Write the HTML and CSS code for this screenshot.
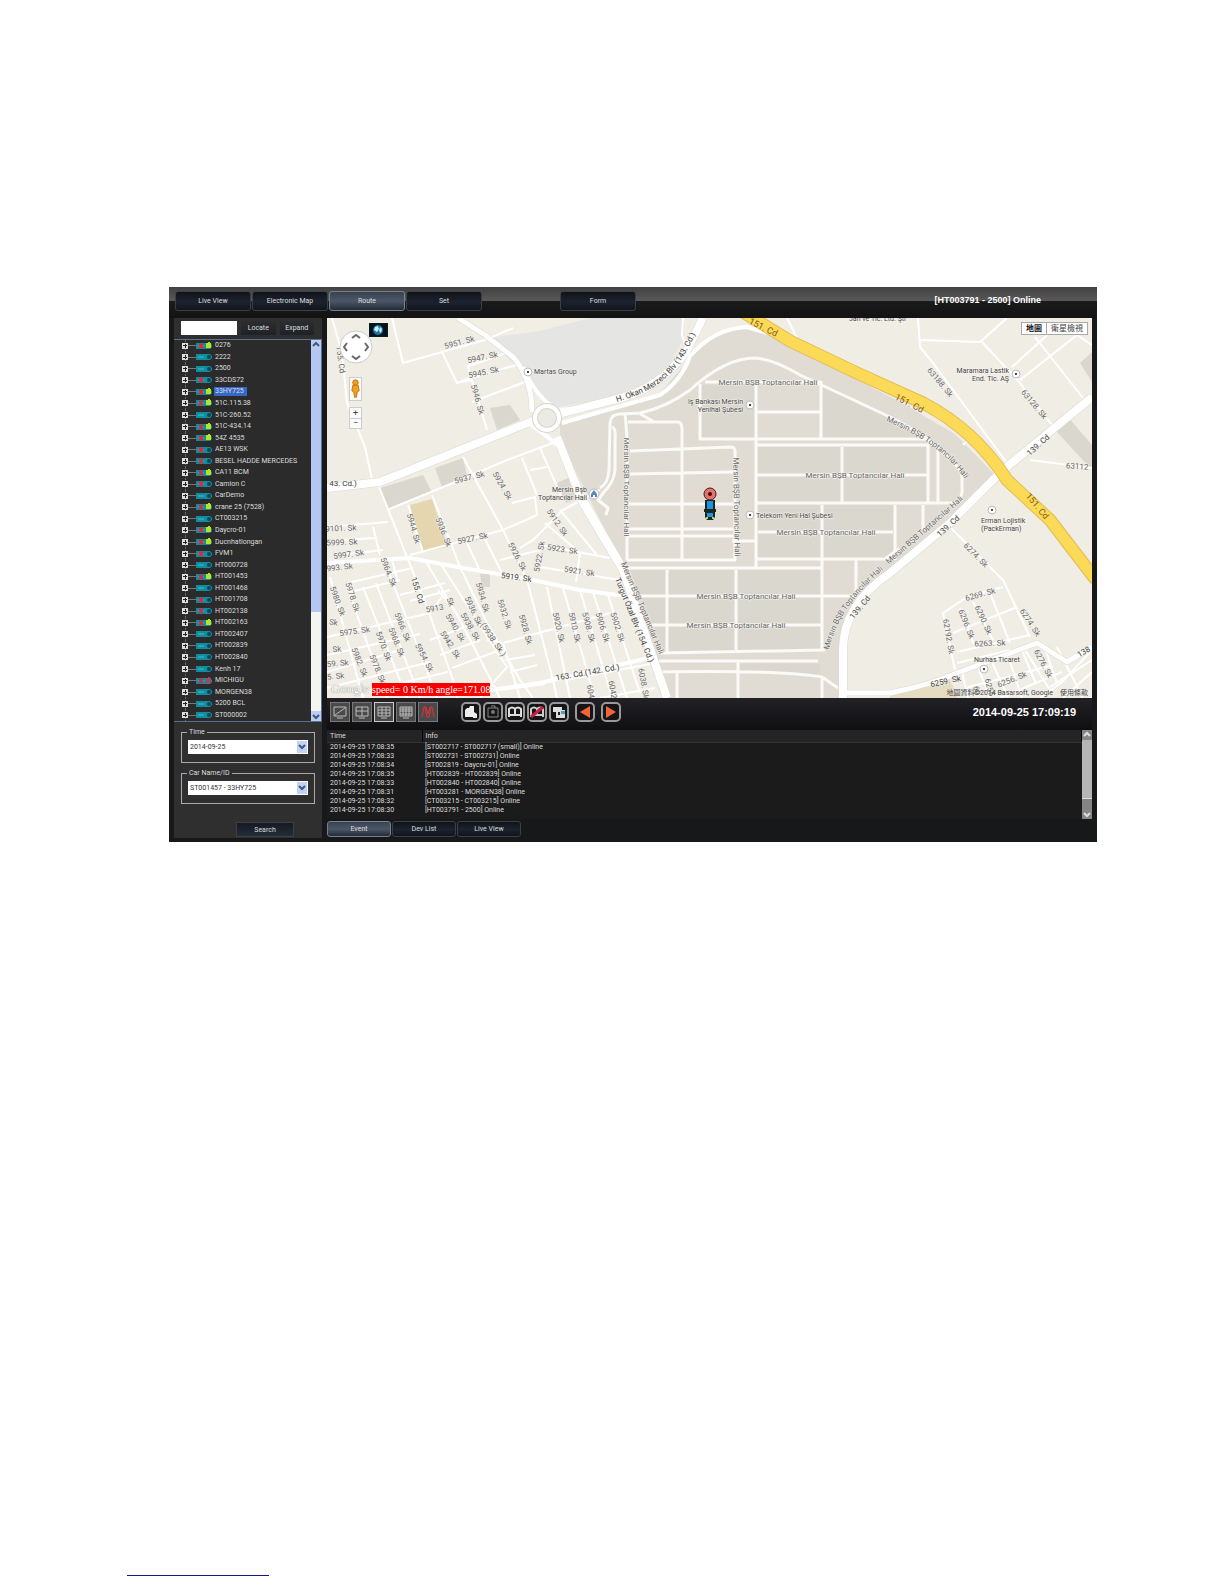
FILE: index.html
```html
<!DOCTYPE html>
<html lang="en">
  <head>
    <meta charset="UTF-8" />
    <meta name="viewport" content="width=device-width, initial-scale=1.0" />
    <title>Route</title>
    <link rel="stylesheet" href="styles.css">
  </head>
  <body>
    <main class="screen">
      <header class="top">
        <nav class="tabs">
          <button>Live View</button>
          <button>Electronic Map</button>
          <button class="current">Route</button>
          <button>Set</button>
          <button class="form-tab">Form</button>
        </nav>
        <strong class="status">[HT003791 - 2500] Online</strong>
      </header>

      <div class="columns">
        <aside class="side">
          <div class="finder">
            <input type="text" aria-label="Car name">
            <button>Locate</button>
            <button>Expand</button>
          </div>
          <div class="tree-box">
            <ul class="tree"></ul>
            <div class="scroll blue">
              <button aria-label="Up"><svg viewBox="0 0 10 10"><path d="M2 6l3-3 3 3" /></svg></button>
              <span class="thumb"></span>
              <button aria-label="Down"><svg viewBox="0 0 10 10"><path d="M2 4l3 3 3-3" /></svg></button>
            </div>
          </div>
          <form class="query">
            <fieldset>
              <legend><label for="time">Time</label></legend>
              <div class="select">
                <select id="time"><option>2014-09-25</option></select>
                <svg viewBox="0 0 10 12"><path d="M2 4l3 3 3-3" /></svg>
              </div>
            </fieldset>
            <fieldset>
              <legend><label for="car">Car Name/ID</label></legend>
              <div class="select">
                <select id="car"><option>ST001457 - 33HY725</option></select>
                <svg viewBox="0 0 10 12"><path d="M2 4l3 3 3-3" /></svg>
              </div>
            </fieldset>
            <button type="button" class="search">Search</button>
          </form>
        </aside>

        <section class="content">
          <div class="map">
            <svg class="map-canvas" viewBox="327 318 765 380" preserveAspectRatio="xMidYMid slice">
              <!-- areas -->
              <path class="gray" d="M486 338L590 318H683L684 338 668 368 650 384 600 400 552 408 530 380 500 350z" />
              <path fill="#f1eee3" d="M480 318H590L540 331 486 338 470 325z" />
              <path class="zone" d="M560 424L600 410 660 393 685 364 710 338 735 327 770 332 800 350 850 376 900 402 955 434 1000 480 960 510 900 560 852 606 843 640V698H665L650 650 625 570 590 500 560 440z" />
              <path class="plot" d="M758 447H926V502H758zM630 570H735V652H665zM738 570H820V650H738zM758 505H894V558H758zM702 385H755V438H702zM823 384L900 424 925 438H823zM740 664H820V674L740 672z" />
              <path class="plot" d="M380 488L423 475 432 492 387 510zM435 468L463 458 468 480 442 487zM490 408L510 405 520 420 497 430zM1057 432L1068 417 1092 445V470zM1080 363L1092 352V382zM555 484L572 476 584 497 566 503zM480 574H490V587H482z" />
              <path fill="#e5d6b0" d="M410 505L432 499 448 547 423 552z" />
              <path fill="#e6dcc2" d="M890 696L950 680 958 698H890z" />

              <!-- side streets -->
              <g class="street">
                <path d="M332 318L342 353 347 403 365 447 373 484M392 318L403 363 442 352 485 340 513 328M442 352L457 383 470 378 468 366 510 352M470 378L520 364M457 383L472 380 487 430M472 402L530 380" />
                <path d="M387 510L453 483 507 460 553 443M378 484L407 557 427 607 453 680 457 698M327 527L388 522M327 541L375 538M373 527L380 555M347 554L383 550M408 505L423 552M432 495L460 567 487 623 520 680 533 698M410 555L503 530 537 515 535 497 512 503M463 457L503 530 527 580 553 680 557 698M483 535L502 573M467 543L480 571" />
                <path d="M522 458L537 495M540 448L563 500M530 470L547 467M520 548L533 540 563 510 600 490M545 523L580 553M560 510L597 555M540 545L610 558M540 567L620 580M580 553L576 582" />
                <path d="M547 587L570 698M563 588L595 698M580 590L612 698M593 592L627 698M608 595L640 693M487 640L503 643 610 613M503 643L520 698M566 680L650 664M600 698L655 688" />
                <path d="M383 558L423 660 437 698M363 587L407 698M376 583L420 698M347 587L387 698M330 577L363 698M440 563L507 667 480 698M425 560L460 620 500 698M347 583L413 568M350 592L400 580M327 637L430 613 447 590M400 595L445 583M410 601L450 590M327 655L420 634M327 672L400 650M327 688L430 662M372 690L448 672M430 640L470 625M440 655L480 640M452 668L500 650M438 590L452 607M500 560L540 550M505 660L535 655M510 672L537 665M500 690L545 684M392 560L398 582" />
                <path d="M918 318L920 347 933 363 1007 463M920 340L980 342 1007 318M982 342L1020 383 1052 425M1035 337L1083 398M1012 367L1055 328M1020 380L1077 335 1092 345M1030 460L1092 468M787 318L797 338M963 445L972 436" />
                <path d="M950 527L1003 580 1030 637M1003 587L967 597 943 613 955 670M953 633L1017 607M957 652L1030 635M960 608L974 645M973 602L993 640M990 593L1010 643M957 663L1010 650M962 672L968 698M978 667L990 698M992 662L1008 698M1008 656L1022 698M1022 650L1036 684M1043 643L1057 683M965 688L1050 666M1000 698L1062 672M1025 650L1050 690M1057 647L1083 698M1050 687L1092 660M1063 698L1092 672M1040 698L1062 682 1092 650" />
                <path d="M683 318L682 335 687 350" />
              </g>
              <g class="lane">
                <path d="M600 488Q608 484 609 470L610 423Q611 413 622 414L640 413Q665 408 690 390 725 358 755 358 775 360 800 375L890 417Q938 440 962 473V493L958 503M612 427Q616 428 615 440V470Q614 482 604 492L598 500 608 508 606 515" />
                <path d="M625 413L627 438V560M628 422H678Q682 422 682 430V560M640 414L653 421M630 451L731 447Q736 447 735 455V560M630 474L733 472M700 384V439H927M705 382H821V438M757 445H928V503M756 385V568M757 412H820M757 475H927M842 447V503M938 450V503M757 503H955M822 505V650M895 505V560M923 505V530" />
                <path d="M757 559H885L900 548M625 568H822M625 504H733M627 529H733M627 536H733M732 541H757M758 532H893M627 560H736M640 596H862M652 625H822M667 570V652M736 570V650M856 560V595M660 653L825 650M658 661H818M660 672Q780 670 822 677L838 688M677 672V698M738 662V698M822 677V698" />
              </g>

              <!-- main roads -->
              <g class="edge">
                <path d="M327 488L380 482 460 450 535 420M559 414L613 400Q660 390 687 350L703 318M557 437L583 503 623 570 647 640 667 698" />
                <path d="M1092 397L1003 470 950 523 890 573Q843 605 843 650V698" />
              </g>
              <g class="edge narrow">
                <path d="M458 318L485 335 513 357Q532 378 532 412M843 693H890Q930 685 957 673L1037 643 1067 662 1092 647" />
              </g>
              <g class="road">
                <path d="M327 488L380 482 460 450 535 420M559 414L613 400Q660 390 687 350L703 318M557 437L583 503 623 570 647 640 667 698" />
                <path d="M1092 397L1003 470 950 523 890 573Q843 605 843 650V698" />
              </g>
              <g class="road thin">
                <path d="M523 367Q535 395 553 407M562 423L600 412 660 395Q682 380 690 356 715 328 747 327L767 333M583 497L620 560 635 595M327 563L410 558 463 568 533 580 580 590 625 596M490 690L540 683 653 657M530 424Q545 434 557 445M560 410L580 408" />
              </g>
              <g class="road medium">
                <path d="M458 318L485 335 513 357Q532 378 532 412M843 693H890Q930 685 957 673L1037 643 1067 662 1092 647" />
              </g>
              <circle class="round-edge" cx="547" cy="418" r="12" />
              <circle class="round" cx="547" cy="418" r="12" />
              <path class="highway-edge" d="M743 312L790 341 857 373 923 403Q975 430 1007 480L1050 520 1096 580" />
              <path class="highway" d="M743 312L790 341 857 373 923 403Q975 430 1007 480L1050 520 1096 580" />

              <!-- street names -->
              <g class="name">
                <text transform="translate(460 345) rotate(-15)">5951. Sk</text>
                <text transform="translate(483 360) rotate(-12)">5947. Sk</text>
                <text transform="translate(484 375) rotate(-12)">5945. Sk</text>
                <text transform="translate(475 400) rotate(74)">5946. Sk</text>
                <text transform="translate(338 360) rotate(82)">155. Cd</text>
                <text transform="translate(470 480) rotate(-14)">5937. Sk</text>
                <text transform="translate(500 487) rotate(60)">5924. Sk</text>
                <text transform="translate(555 524) rotate(55)">5912. Sk</text>
                <text transform="translate(411 529) rotate(74)">5944. Sk</text>
                <text transform="translate(441 533) rotate(68)">5936. Sk</text>
                <text transform="translate(473 541) rotate(-12)">5927. Sk</text>
                <text transform="translate(341 531) rotate(-3)">9101. Sk</text>
                <text transform="translate(342 545) rotate(-2)">5999. Sk</text>
                <text transform="translate(349 557) rotate(-8)">5997. Sk</text>
                <text transform="translate(340 570) rotate(-7)">993. Sk</text>
                <text transform="translate(515 558) rotate(62)">5926. Sk</text>
                <text transform="translate(542 557) rotate(-80)">5922. Sk</text>
                <text transform="translate(562 552) rotate(8)">5923. Sk</text>
                <text transform="translate(579 574) rotate(8)">5921. Sk</text>
                <text transform="translate(386 573) rotate(68)">5964. Sk</text>
                <text transform="translate(350 598) rotate(72)">5978. Sk</text>
                <text transform="translate(335 602) rotate(70)">5980. Sk</text>
                <text transform="translate(480 598) rotate(74)">5934. Sk</text>
                <text transform="translate(435 611) rotate(-10)">5913</text>
                <text transform="translate(448 603) rotate(70)">Sk</text>
                <text transform="translate(471 612) rotate(65)">5936. Sk</text>
                <text transform="translate(502 615) rotate(72)">5932. Sk</text>
                <text transform="translate(453 629) rotate(60)">5940. Sk</text>
                <text transform="translate(468 628) rotate(60)">5938. Sk</text>
                <text transform="translate(491 641) rotate(56)">(5938. Sk.)</text>
                <text transform="translate(400 628) rotate(68)">5966. Sk</text>
                <text transform="translate(394 643) rotate(68)">5968. Sk</text>
                <text transform="translate(381 647) rotate(70)">5970. Sk</text>
                <text transform="translate(355 634) rotate(-8)">5975. Sk</text>
                <text transform="translate(448 646) rotate(58)">5942. Sk</text>
                <text transform="translate(523 630) rotate(74)">5928. Sk</text>
                <text transform="translate(556 628) rotate(77)">5920. Sk</text>
                <text transform="translate(572 628) rotate(77)">5910. Sk</text>
                <text transform="translate(586 628) rotate(75)">5908. Sk</text>
                <text transform="translate(600 628) rotate(73)">5906. Sk</text>
                <text transform="translate(615 628) rotate(72)">5902. Sk</text>
                <text transform="translate(357 663) rotate(68)">5982. Sk</text>
                <text transform="translate(375 670) rotate(68)">5978. Sk</text>
                <text transform="translate(422 659) rotate(62)">5954. Sk</text>
                <text transform="translate(338 666) rotate(-5)">59. Sk</text>
                <text transform="translate(336 679) rotate(-5)">5. Sk</text>
                <text transform="translate(335 652) rotate(-5)">. Sk</text>
                <text transform="translate(333 625) rotate(10)">Sk</text>
                <text transform="translate(610 690) rotate(80)">6042</text>
                <text transform="translate(641 684) rotate(80)">6038. Sk</text>
                <text transform="translate(588 692) rotate(80)">604</text>
                <text transform="translate(938 384) rotate(50)">63188. Sk</text>
                <text transform="translate(1032 406) rotate(50)">63128. Sk</text>
                <text transform="translate(1077 469) rotate(4)">63112</text>
                <text transform="translate(974 557) rotate(45)">6274. Sk</text>
                <text transform="translate(981 597) rotate(-15)">6269. Sk</text>
                <text transform="translate(964 625) rotate(68)">6296. Sk</text>
                <text transform="translate(981 621) rotate(65)">6290. Sk</text>
                <text transform="translate(946 637) rotate(80)">62192. Sk</text>
                <text transform="translate(990 646) rotate(-2)">6263. Sk</text>
                <text transform="translate(1028 624) rotate(57)">6274. Sk</text>
                <text transform="translate(1041 665) rotate(62)">6276. Sk</text>
                <text transform="translate(1013 682) rotate(-22)">6256. Sk</text>
                <text transform="translate(974 691) rotate(80)">60</text>
                <text transform="translate(987 688) rotate(75)">6255</text>
              </g>
              <g class="name">
                <text x="768" y="385">Mersin BŞB Toptancılar Hali</text>
                <text x="855" y="478">Mersin BŞB Toptancılar Hali</text>
                <text x="826" y="535">Mersin BŞB Toptancılar Hali</text>
                <text x="746" y="599">Mersin BŞB Toptancılar Hali</text>
                <text x="736" y="628">Mersin BŞB Toptancılar Hali</text>
                <text transform="translate(624 487) rotate(90)">Mersin BŞB Toptancılar Hali</text>
                <text transform="translate(734 507) rotate(89)">Mersin BŞB Toptancılar Hali</text>
                <text transform="translate(640 609) rotate(67)">Mersin BŞB Toptancılar Hali</text>
                <text transform="translate(926 532) rotate(-41)">Mersin BŞB Toptancılar Hali</text>
                <path id="hall-east" fill="none" stroke="none" d="M886 421Q945 445 968 484" />
                <path id="hall-south" fill="none" stroke="none" d="M829 650Q838 606 888 566" />
                <text class="along"><textPath href="#hall-east">Mersin BŞB Toptancılar Hali</textPath></text>
                <text class="along"><textPath href="#hall-south">Mersin BŞB Toptancılar Hali</textPath></text>
              </g>
              <g class="name big">
                <text x="343" y="486">43. Cd.)</text>
                <text transform="translate(516 580) rotate(7)">5919. Sk</text>
                <text transform="translate(415 591) rotate(73)">155. Cd</text>
                <text transform="translate(588 675) rotate(-10)">163. Cd.(142. Cd.)</text>
                <text transform="translate(632 621) rotate(68)">Turgut Özal Blv (154. Cd.)</text>
                <text transform="translate(946 684) rotate(-12)">6259. Sk</text>
                <text transform="translate(1040 447) rotate(-42)">139. Cd</text>
                <text transform="translate(950 528) rotate(-42)">139. Cd</text>
                <text transform="translate(862 609) rotate(-50)">139. Cd</text>
                <text transform="translate(1085 654) rotate(-30)">138</text>
                <path id="okan" fill="none" stroke="none" d="M617 402C655 390 678 380 702 318" />
                <text class="along"><textPath href="#okan">H. Okan Merzeci Blv (143. Cd.)</textPath></text>
              </g>
              <g class="name highway-name">
                <text transform="translate(762 330) rotate(26)">151. Cd</text>
                <text transform="translate(908 406) rotate(27)">151. Cd</text>
                <text transform="translate(1035 508) rotate(50)">151. Cd</text>
              </g>

              <!-- places -->
              <g class="place">
                <text x="534" y="374">Martas Group</text>
                <text class="end" x="743" y="404">İş Bankası Mersin</text>
                <text class="end" x="743" y="412">Yenihal Şubesi</text>
                <text class="end" x="1009" y="373">Maramara Lastik</text>
                <text class="end" x="1009" y="381">End. Tic. AŞ</text>
                <text class="end" x="587" y="492">Mersin Bşb</text>
                <text class="end" x="587" y="500">Toptancılar Hali</text>
                <text x="756" y="518">Telekom Yeni Hal Şubesi</text>
                <text x="981" y="523">Erman Lojistik</text>
                <text x="981" y="531">(PackErman)</text>
                <text x="974" y="662">Nurhas Ticaret</text>
                <text x="849" y="321">Jan ve Tic. Ltd. Şti</text>
              </g>
              <g class="pin">
                <circle cx="528" cy="372" r="4" /><circle cx="750" cy="405" r="4" /><circle cx="1016" cy="374" r="4" /><circle cx="750" cy="515" r="4" /><circle cx="992" cy="510" r="4" /><circle cx="984" cy="669" r="4" /><circle cx="594" cy="494" r="5" />
              </g>
              <path fill="#444" d="M527 371h2v2h-2zM749 404h2v2h-2zM1015 373h2v2h-2zM749 514h2v2h-2zM991 509h2v2h-2zM983 668h2v2h-2z" />
              <path fill="#5b86c4" d="M594 490l3 4v3h-2v-2h-2v2h-2v-3z" />

              <!-- tracked car -->
              <path fill="#1a2a1a" d="M705 500h10v9h1v3h-1v5l-2 3h-6l-2-3v-5h-1v-3h1z" />
              <path fill="#2191e6" d="M707 501h6v8h-6zM707 513h6v4h-6z" />
              <path fill="#9fdc6a" d="M706 517h2v2h-2zM712 517h2v2h-2z" />
              <circle cx="710" cy="494" r="6" fill="#e8716b" stroke="#3a1c1c" />
              <circle cx="710" cy="494" r="2" fill="#3a0d0d" />
            </svg>

            <svg class="pan" viewBox="0 0 34 34">
              <circle cx="17" cy="17" r="16" />
              <path d="M13 8l4-3 4 3M13 26l4 3 4-3M8 13l-3 4 3 4M26 13l3 4-3 4" />
            </svg>
            <svg class="globe" viewBox="0 0 19 14">
              <path fill="#05131d" stroke="#222" d="M0 0h19v14H0z" />
              <circle cx="9" cy="7" r="5" fill="#1c76a8" />
              <path fill="#c8f1f5" d="M6 4l3-1 1 3-2 3-3-2zM11 4l2 2-1 4-2-2z" />
            </svg>
            <button class="pegman" aria-label="Street view">
              <svg viewBox="0 0 12 24">
                <circle cx="6" cy="5" r="3" />
                <path d="M3 8h6l1 6-2 1-1 6H5l-1-6-2-1z" />
              </svg>
            </button>
            <div class="zoom">
              <button>+</button>
              <button>−</button>
            </div>
            <div class="map-type">
              <button class="current">地圖</button>
              <button>衛星檢視</button>
            </div>
            <span class="brand">Google</span>
            <span class="speed">speed= 0 Km/h angle=171.08</span>
            <div class="credit"><span>地圖資料©2014 Basarsoft, Google</span><a href="#">使用條款</a></div>
          </div>

          <div class="toolbar">
            <div class="layouts">
              <button aria-label="One view"><svg viewBox="0 0 18 18"><path d="M3 4h12v9H3zM4 12l10-7M6 15h6" /></svg></button>
              <button aria-label="Four views"><svg viewBox="0 0 18 18"><path d="M3 4h12v9H3zM9 4v9M3 8h12M6 15h6" /></svg></button>
              <button class="current" aria-label="Nine views"><svg viewBox="0 0 18 18"><path d="M3 4h12v9H3zM7 4v9M11 4v9M3 7h12M3 10h12M6 15h6" /></svg></button>
              <button aria-label="Sixteen views"><svg viewBox="0 0 18 18"><path d="M3 4h12v9H3zM6 4v9M9 4v9M12 4v9M3 6h12M3 8h12M3 11h12M6 15h6" /></svg></button>
              <button class="red" aria-label="Map"><svg viewBox="0 0 18 18"><path d="M3 14L5 4h2l2 7 2-7h2l2 10M6 5l2 9h2l2-9" /></svg></button>
            </div>
            <div class="actions">
              <button aria-label="Record"><svg viewBox="0 0 20 20"><path fill="#eee" d="M4 8l2-2h2l1-2h4v6l3 2v4h-4v-1H4z" /></svg></button>
              <button aria-label="Snapshot"><svg viewBox="0 0 20 20"><path fill="none" stroke="#888" d="M5 6h10v9H5zM8 4h4v2" /><circle cx="10" cy="10" r="2" fill="#777" /></svg></button>
              <button aria-label="Open all"><svg viewBox="0 0 20 20"><path fill="none" stroke="#ddd" stroke-width="2" d="M4 15V7q3-3 6 0 3-3 6 0v8M10 7v7M4 13h12" /></svg></button>
              <button aria-label="Close all"><svg viewBox="0 0 20 20"><path fill="none" stroke="#ccc" stroke-width="2" d="M4 15V7q3-3 6 0 3-3 6 0v8M10 7v7M4 13h12" /><path stroke="#c4213c" stroke-width="3" d="M4 15L16 5" /></svg></button>
              <button aria-label="Swap"><svg viewBox="0 0 20 20"><path fill="#ddd" d="M4 5h9v3h3v8H7v-6H4z" /><path fill="#4c9dc4" d="M12 9h4v3h-4z" /><path fill="#222" d="M9 10h2v3H9z" /></svg></button>
              <button class="gap" aria-label="Back"><svg viewBox="0 0 20 20"><path fill="#f0663a" d="M15 4v12L5 10z" /></svg></button>
              <button class="gap" aria-label="Forward"><svg viewBox="0 0 20 20"><path fill="#f0663a" d="M5 4v12l10-6z" /></svg></button>
            </div>
            <time class="clock">2014-09-25 17:09:19</time>
          </div>

          <div class="log">
            <table>
              <thead>
                <tr><th class="when">Time</th><th>Info</th></tr>
              </thead>
              <tbody>
                <tr><td>2014-09-25 17:08:35</td><td>[ST002717 - ST002717 (small)] Online</td></tr>
                <tr><td>2014-09-25 17:08:33</td><td>[ST002731 - ST002731] Online</td></tr>
                <tr><td>2014-09-25 17:08:34</td><td>[ST002819 - Daycru-01] Online</td></tr>
                <tr><td>2014-09-25 17:08:35</td><td>[HT002839 - HT002839] Online</td></tr>
                <tr><td>2014-09-25 17:08:33</td><td>[HT002840 - HT002840] Online</td></tr>
                <tr><td>2014-09-25 17:08:31</td><td>[HT003281 - MORGEN38] Online</td></tr>
                <tr><td>2014-09-25 17:08:32</td><td>[CT003215 - CT003215] Online</td></tr>
                <tr><td>2014-09-25 17:08:30</td><td>[HT003791 - 2500] Online</td></tr>
              </tbody>
            </table>
            <div class="scroll grey">
              <button aria-label="Up"><svg viewBox="0 0 10 10"><path d="M2 6l3-3 3 3" /></svg></button>
              <span class="thumb"></span>
              <button aria-label="Down"><svg viewBox="0 0 10 10"><path d="M2 4l3 3 3-3" /></svg></button>
            </div>
          </div>

          <nav class="tabs bottom">
            <button class="current">Event</button>
            <button>Dev List</button>
            <button>Live View</button>
          </nav>
        </section>
      </div>
    </main>
    <div class="footnote"></div>

    <script>
      // name, state: on / alarm / off / lost
      var cars = [
        ["0276", "on"], ["2222", "off"], ["2500", "off"], ["33CDS72", "alarm"],
        ["33HY725", "on"], ["51C.115.38", "on"], ["51C-260.52", "off"],
        ["51C-434.14", "on"], ["54Z 4535", "on"], ["AE13 WSK", "alarm"],
        ["BESEL HADDE MERCEDES", "alarm"], ["CA11 BCM", "on"], ["Camion C", "alarm"],
        ["CarDemo", "off"], ["crane 25 (7528)", "on"], ["CT003215", "off"],
        ["Daycro-01", "on"], ["Ducnhatlongan", "on"], ["FVM1", "alarm"],
        ["HT000728", "off"], ["HT001453", "on"], ["HT001468", "off"],
        ["HT001708", "alarm"], ["HT002138", "alarm"], ["HT002163", "on"],
        ["HT002407", "off"], ["HT002839", "off"], ["HT002840", "off"],
        ["Kenh 17", "off"], ["MICHIGU", "lost"], ["MORGEN38", "off"],
        ["5200 BCL", "off"], ["ST000002", "off"]
      ];
      var tree = document.querySelector(".tree");

      for (var i = 0; i < cars.length; i++) {
        var li = document.createElement("li");
        li.className = cars[i][1];
        li.innerHTML =
          '<button class="toggle" aria-label="Expand"></button>' +
          '<svg class="car" viewBox="0 0 16 8"><path class="body" d="M0 1h14l2 2v2l-2 2H0z"/>' +
          '<path class="wire" d="M2 4h6"/><circle class="eye" cx="13" cy="4" r="2"/>' +
          '<path class="cross" d="M3 2l4 4M7 2L3 6"/><path class="lamp" d="M10 1h2V0h2v1h1v5h-5z"/></svg>' +
          "<span>" + cars[i][0] + "</span>";
        if (cars[i][0] === "33HY725") li.classList.add("selected");
        tree.appendChild(li);
      }
    </script>
  </body>
</html>
```
FILE: styles.css
```css
* {
  box-sizing: border-box;
}
body {
  margin: 0;
  min-height: 100vh;
  display: flex;
  flex-direction: column;
  background: #fff;
  font-family: Roboto, "Noto Sans CJK TC", sans-serif;
  font-size: 7px;
  color: #ddd;
}
button,
input,
select {
  font: inherit;
  color: inherit;
  margin: 0;
  padding: 0;
  border: 0;
  background: none;
}
ul {
  list-style: none;
  margin: 0;
  padding: 0;
}
svg {
  display: block;
}
.screen {
  margin: 287px 127px 0 169px;
  background: #17181a;
}

/* header */
.top {
  height: 31px;
  padding: 4px 56px 7px 6px;
  display: flex;
  justify-content: space-between;
  background: linear-gradient(#414141, #585858 44%, #1b1b1b 46%, #131313);
}
.tabs {
  display: flex;
  gap: 1px;
}
.tabs button {
  width: 76px;
  height: 20px;
  border: 1px solid #3a4048;
  border-radius: 3px;
  background: linear-gradient(#101318, #1c2330 55%, #10141b);
}
.tabs .current {
  border-color: #76818f;
  background: linear-gradient(#39424f, #4b5768 50%, #232b37);
}
.tabs .form-tab {
  margin-left: 77px;
}
.status {
  font: bold 9px/19px "Liberation Sans", sans-serif;
  color: #fff;
}

.columns {
  display: flex;
  gap: 5px;
  padding: 0 5px 4px;
}

/* left panel */
.side {
  width: 148px;
  flex: none;
  background: #2f2f2f;
}
.finder {
  display: flex;
  gap: 4px;
  height: 21px;
  padding: 3px 8px 4px 7px;
}
.finder input {
  width: 56px;
  background: #fff;
  color: #000;
}
.finder button {
  flex: 1;
  background: linear-gradient(#2c2d30, #1e2228);
}
.tree-box {
  display: flex;
  height: 383px;
  border: 1px solid #5c6f8c;
  border-left: 0;
  background: #2b2b2b;
}
.tree {
  flex: 1;
  display: grid;
  grid-auto-rows: 1fr;
  padding-left: 8px;
}
.tree li {
  position: relative;
  display: flex;
  align-items: center;
  gap: 2px;
  white-space: nowrap;
}
.tree li::before {
  content: "";
  position: absolute;
  left: 3px;
  top: 0;
  width: 10px;
  height: 100%;
  background: linear-gradient(#777, #777) 0 50% / 10px 1px no-repeat;
  border-left: 1px dotted #666;
}
.toggle {
  position: relative;
  width: 6px;
  height: 6px;
  margin-right: 6px;
  background: linear-gradient(#222, #222) 50% 50% / 4px 1px no-repeat,
    linear-gradient(#222, #222) 50% 50% / 1px 4px no-repeat, #ddd;
}
.car {
  width: 16px;
  height: 8px;
}
.tree span {
  line-height: 9px;
  padding: 0 1px;
}
.tree .selected span {
  padding-right: 3px;
  background: #3568c8;
}
.body {
  fill: #0e8ea0;
}
.wire {
  stroke: #48bccb;
}
.eye {
  fill: #0c4554;
}
.cross {
  stroke: #d8283c;
  stroke-width: 2;
}
.lamp {
  fill: #b5e61d;
}
.off .cross,
.off .lamp,
.alarm .lamp {
  display: none;
}
.lost .lamp {
  fill: #a44858;
}

.scroll {
  width: 10px;
  display: flex;
  flex-direction: column;
}
.scroll button {
  width: 10px;
  height: 10px;
  background: #bccdf5;
}
.scroll path,
.select path {
  fill: none;
  stroke: #40577f;
  stroke-width: 2;
}
.blue {
  background: #f4f4f1;
}
.blue .thumb {
  height: 262px;
  margin-bottom: auto;
  background: #b4c7f3;
}
.grey {
  background: #b5b5b5;
}
.grey button,
.grey .thumb {
  background: #858585;
}
.grey .thumb {
  height: 11px;
  margin-top: auto;
  border-top: 1px solid #ddd;
}
.grey path {
  stroke: #ddd;
}

/* search form */
.query {
  padding: 6px 7px 1px;
}
.query fieldset {
  min-width: 0;
  margin: 0 0 6px;
  padding: 3px 6px 8px;
  border: 1px solid #aaa;
}
.query legend {
  margin-left: -1px;
  padding: 0 2px;
  line-height: 9px;
}
.select {
  position: relative;
}
.select select {
  display: block;
  appearance: none;
  width: 100%;
  height: 14px;
  padding: 0 2px;
  background: #fff;
  color: #333;
}
.select svg {
  position: absolute;
  top: 1px;
  right: 1px;
  width: 10px;
  height: 12px;
  background: #c3d3f8;
  pointer-events: none;
}
.search {
  display: block;
  width: 58px;
  height: 15px;
  margin: 18px 21px 0 auto;
  border: 1px solid #3a4048;
  background: linear-gradient(#161a21, #242c3a);
}

/* map */
.content {
  flex: 1;
  min-width: 0;
}
.map {
  position: relative;
  height: 380px;
  overflow: hidden;
  background: #f0ede5;
  color: #444;
}
.map-canvas {
  width: 100%;
  height: 100%;
  stroke-linejoin: round;
}
.gray {
  fill: #e5e5e4;
}
.zone {
  fill: #e0dcd4;
}
.plot {
  fill: #dad7cf;
}
.street,
.lane,
.edge,
.road {
  fill: none;
  stroke: #fff;
}
.street {
  stroke-width: 2;
}
.lane {
  stroke: #fbfaf7;
  stroke-width: 3;
}
.edge {
  stroke: #dcd8d0;
  stroke-width: 9;
}
.road {
  stroke-width: 8;
}
.narrow {
  stroke-width: 6;
}
.medium {
  stroke-width: 5;
}
.thin {
  stroke-width: 4;
}
.round-edge {
  fill: #eceae4;
  stroke: #d6d3cc;
  stroke-width: 6;
}
.round {
  fill: none;
  stroke: #fff;
  stroke-width: 4;
}
.highway-edge {
  fill: none;
  stroke: #e3bb55;
  stroke-width: 13;
}
.highway {
  fill: none;
  stroke: #fbda57;
  stroke-width: 11;
}
.name {
  font-size: 8px;
}
.name text,
.place text {
  fill: #666;
  stroke: #f7f5f0;
  stroke-width: 1;
  paint-order: stroke;
  text-anchor: middle;
}
.name .along,
.place text {
  text-anchor: start;
}
.place .end {
  text-anchor: end;
}
.place text,
.big text {
  fill: #444;
}
.highway-name {
  font-size: 9px;
}
.highway-name text {
  fill: #87561c;
  stroke: none;
}
.pin {
  fill: #fff;
  stroke: #bbb;
}

.pan {
  position: absolute;
  left: 12px;
  top: 12px;
  width: 34px;
}
.pan circle {
  fill: #fff;
  stroke: #ccc;
}
.pan path {
  fill: none;
  stroke: #666;
  stroke-width: 2;
}
.globe {
  position: absolute;
  left: 42px;
  top: 5px;
  width: 19px;
}
.pegman,
.zoom {
  position: absolute;
  left: 22px;
  width: 13px;
  border: 1px solid #ccc;
  background: #fafafa;
}
.pegman {
  top: 59px;
}
.pegman svg {
  width: 11px;
  fill: #f0a01e;
  stroke: #b9740c;
}
.zoom {
  top: 89px;
  display: flex;
  flex-direction: column;
}
.zoom button {
  height: 10px;
  font-size: 9px;
  line-height: 9px;
}
.zoom button + button {
  border-top: 1px solid #ccc;
}
.map-type {
  position: absolute;
  top: 4px;
  right: 4px;
  display: flex;
  border: 1px solid #aaa;
  background: #fff;
}
.map-type button {
  height: 11px;
  padding: 0 4px;
  font-size: 8px;
  line-height: 11px;
}
.map-type .current {
  font-weight: bold;
  color: #111;
}
.map-type button + button {
  border-left: 1px solid #aaa;
}
.brand {
  position: absolute;
  left: 4px;
  bottom: 2px;
  font: 13px/14px "Liberation Serif", serif;
  color: #fff;
  text-shadow: 0 0 1px #555;
}
.speed {
  position: absolute;
  left: 45px;
  bottom: 2px;
  font: 10px/13px "Liberation Serif", serif;
  background: #f80000;
  color: #fff;
}
.credit {
  position: absolute;
  right: 4px;
  bottom: 1px;
  display: flex;
  gap: 7px;
}
.credit a {
  color: inherit;
  text-decoration: none;
}

/* toolbar under the map */
.toolbar {
  display: flex;
  align-items: center;
  height: 32px;
  padding: 0 16px 4px 3px;
  background: linear-gradient(#222226, #0f0f12);
}
.layouts,
.actions {
  display: flex;
  gap: 2px;
}
.layouts button {
  width: 20px;
  height: 20px;
  border: 1px solid #777;
  background: #4a4a4a;
}
.layouts .current {
  border-color: #ccc;
}
.layouts path {
  fill: none;
  stroke: #bbb;
}
.layouts .red path {
  stroke: #e0303a;
}
.actions {
  margin-left: 23px;
}
.actions button {
  width: 20px;
  height: 20px;
  border: 2px solid #999;
  border-radius: 5px;
  background: #151515;
}
.actions svg {
  width: 20px;
  margin: -2px;
}
.actions .gap {
  margin-left: 4px;
}
.clock {
  margin-left: auto;
  font: bold 11px "Liberation Sans", sans-serif;
  color: #fff;
}

/* event log */
.log {
  display: flex;
  height: 89px;
  background: #1b1b1c;
}
.log table {
  flex: 1;
  align-self: flex-start;
  border-collapse: collapse;
}
.log th {
  height: 12px;
  padding: 0 3px;
  font-weight: normal;
  text-align: left;
  background: #242424;
  border-right: 1px solid #000;
  border-bottom: 1px solid #333;
}
.log .when {
  width: 95px;
}
.log td {
  height: 9px;
  padding: 0 3px;
  line-height: 9px;
}
.bottom {
  padding-top: 2px;
}
.bottom button {
  width: 64px;
  height: 16px;
}

.footnote {
  width: 142px;
  margin: auto 0 8px 127px;
  border-top: 1px solid #14148c;
}
```
